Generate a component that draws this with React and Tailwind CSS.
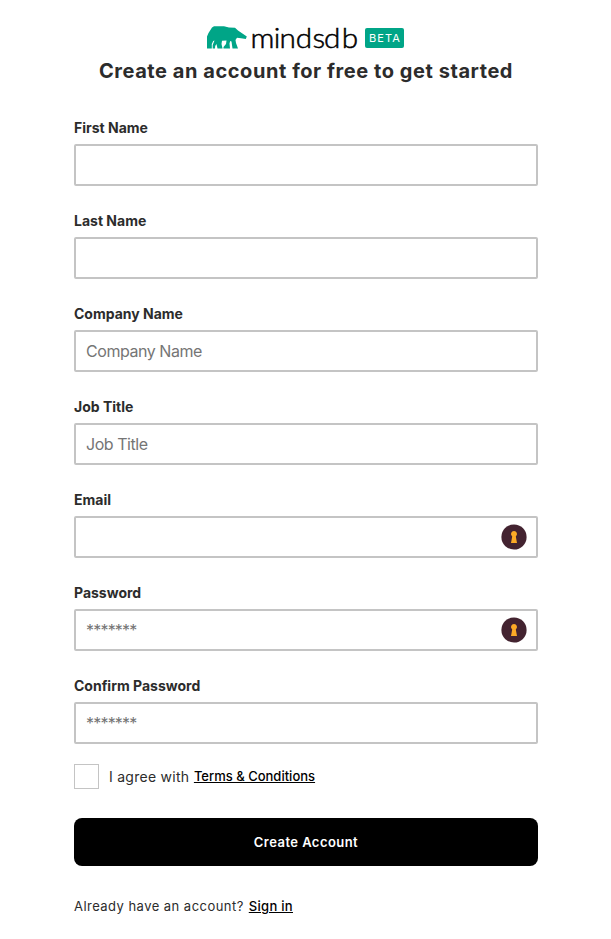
function Logo() {
  return (
    <div className="flex h-[26px] items-start" aria-label="mindsdb beta">
      <svg width="40" height="24" viewBox="0 0 40 24" className="mt-px shrink-0" fill="#00a587">
        <path d="M0 22.5V10.5L1.5 7L5 1.5L7 0.3H17L22 1.5L28 1.7L31 4.5L39.8 10.5L38.8 13L34 12.2L30 11.8L28.5 14L29 17L31 22.5H25.5L24.5 15.5L23.2 15L22.5 17.5L23 22.5H16.5V21L19 18L19.5 14.5L15 14.8L14.5 18L15.5 22.5H10.5L9.5 18L8.2 20L8 22.5H5.7V19L7.5 14.5L6.2 15L4.8 18V22.5Z" />
      </svg>
      <svg width="110" height="44" viewBox="0 -9 110 44" className="-mt-[9px] ml-1 shrink-0">
        <text
          x="-0.5 20.8 26 40.6 56 66.4 82.6"
          y="23"
          transform="scale(1.1 1)"
          strokeWidth="0.5"
          className="fill-black stroke-black font-['Lato',sans-serif] text-[27px] font-light"
        >
          mindsdb
        </text>
      </svg>
      <span className="ml-1 mt-[3px] flex h-5 w-[39px] items-center justify-center rounded-[2px] bg-[#00a587] pl-px text-[11px] tracking-[1.1px] text-white">BETA</span>
    </div>
  );
}

function PasswordManagerIcon() {
  return (
    <svg width="26" height="26" viewBox="0 0 26 26" className="shrink-0">
      <circle cx="13" cy="13" r="12.6" fill="#432330" />
      <path d="M13 7a3 3 0 0 0-1.8 5.4L10 19h6l-1.2-6.6A3 3 0 0 0 13 7Z" fill="#fcaa26" />
    </svg>
  );
}

function Field({ label, placeholder = "", type = "text", manager = false }) {
  const tracking = type === "password" ? "tracking-[-0.8px]" : "tracking-[-0.45px]";
  return (
    <label className="block h-[93px]">
      <span className="block h-6 text-[14px] leading-4 font-bold text-[#2c2c2c]">{label}</span>
      <span className="flex h-[42px] items-center rounded-[2px] border-2 border-[#c4c4c4] pr-[9px] pl-2.5">
        <input
          type={type}
          placeholder={placeholder}
          className={`h-full min-w-0 flex-1 text-[16px] outline-none placeholder:text-[#757575] ${tracking}`}
        />
        {manager && <PasswordManagerIcon />}
      </span>
    </label>
  );
}

export default function App() {
  return (
    <main className="h-[939px] bg-white pt-[25px] font-['Inter',sans-serif] text-[#2c2c2c]">
      <header className="flex flex-col items-center">
        <Logo />
        <h1 className="mt-[5px] pl-px text-[20px] leading-[30px] font-bold tracking-[0.56px] whitespace-nowrap">
          Create an account for free to get started
        </h1>
      </header>
      <form className="mt-[34px] ml-[74px] w-[464px]">
        <Field label="First Name" />
        <Field label="Last Name" />
        <Field label="Company Name" placeholder="Company Name" />
        <Field label="Job Title" placeholder="Job Title" />
        <Field label="Email" type="email" manager />
        <Field label="Password" type="password" placeholder="*******" manager />
        <Field label="Confirm Password" type="password" placeholder="*******" />
        <div className="-mt-[7px] flex h-[25px] items-center">
          <input type="checkbox" className="size-[25px] appearance-none border border-[#c4c4c4]" />
          <span className="ml-2.5 text-[14px] tracking-[0.27px]">I agree with</span>
          <a href="#terms" className="ml-[4.5px] text-[13px] font-medium text-black underline">Terms &amp; Conditions</a>
        </div>
        <button type="button" className="mt-[29px] block h-12 w-full rounded-lg bg-black pt-px text-[13px] font-semibold tracking-[0.45px] text-white">
          Create Account
        </button>
        <p className="mt-[31px] flex h-5 items-center text-[13px] tracking-[0.46px]">
          Already have an account?
          <a href="#signin" className="ml-[5px] font-medium tracking-[0.3px] text-black underline">Sign in</a>
        </p>
      </form>
    </main>
  );
}
